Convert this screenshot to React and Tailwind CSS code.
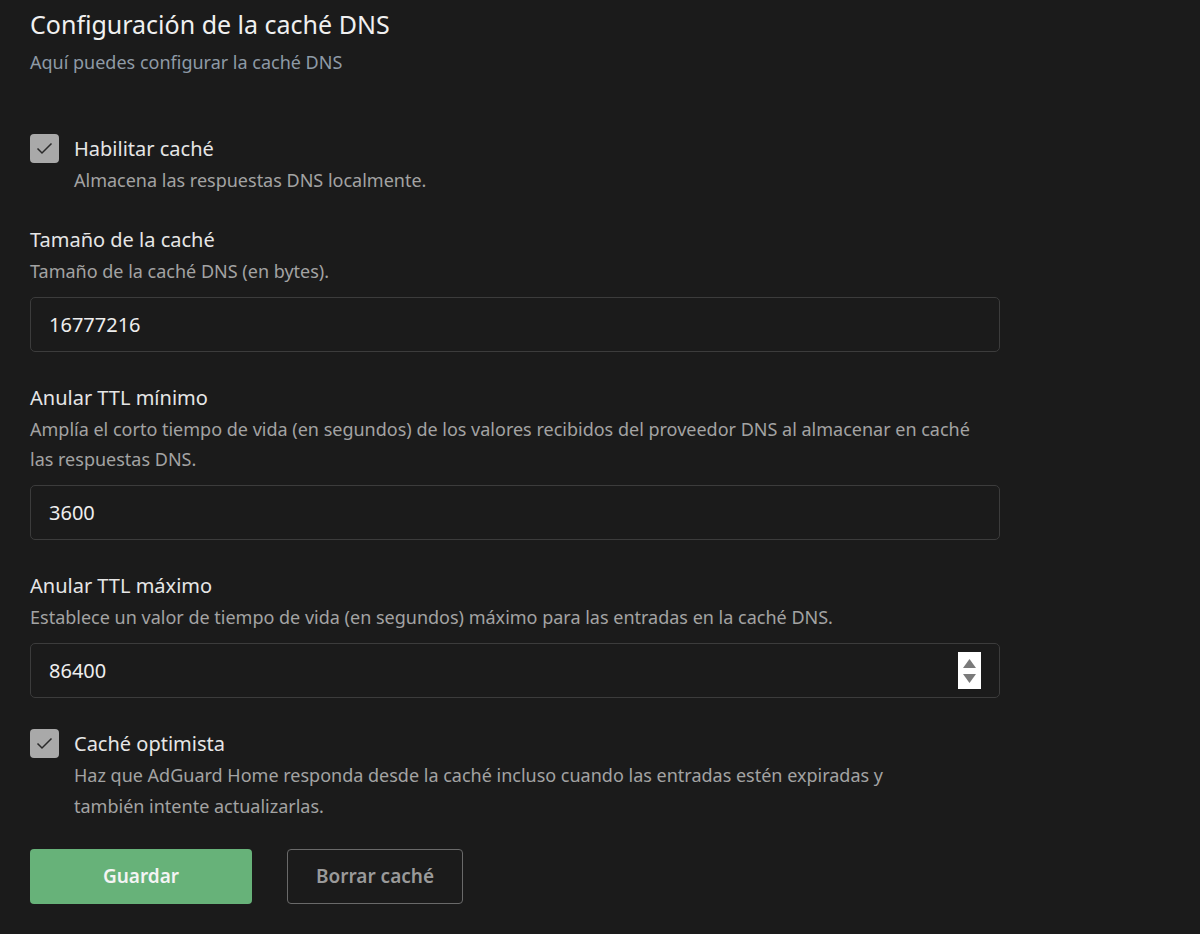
import React, { useState } from "react";

function Check({ checked, onChange }) {
    return (
        <button
            onClick={onChange}
            className="w-[29px] h-[29px] shrink-0 rounded-[4px] bg-[#a9a9a9] flex items-center justify-center"
        >
            {checked && (
                <svg width="17" height="13" viewBox="0 0 17 13" fill="none">
                    <path d="M1.5 6.5 L6 11 L15.5 1.5" stroke="#2a2a2a" strokeWidth="1.5" />
                </svg>
            )}
        </button>
    );
}

function Field({ label, desc, value, onChange, spinner }) {
    return (
        <div>
            <div className="text-[20px] text-[#e6e6e6] leading-[28px]">{label}</div>
            <div className="text-[18px] text-[#a3a3a3] leading-[30px] mt-[2px] max-w-[950px]">{desc}</div>
            <div className="relative mt-[11px] w-[970px] h-[55px] rounded-[5px] border border-[#3c3c3c] bg-[#1b1b1b] flex items-center">
                <input
                    type="text"
                    value={value}
                    onChange={(e) => onChange(e.target.value)}
                    className="w-full bg-transparent outline-none px-[18px] text-[20px] text-[#eeeeee]"
                />
                {spinner && (
                    <div className="absolute right-[18px] top-[8px] w-[23px] h-[37px] bg-white flex flex-col items-center justify-center gap-[6px]">
                        <svg width="13" height="9" viewBox="0 0 13 9">
                            <path d="M6.5 0 L13 9 L0 9 Z" fill="#7a7a7a" />
                        </svg>
                        <svg width="13" height="9" viewBox="0 0 13 9">
                            <path d="M0 0 L13 0 L6.5 9 Z" fill="#7a7a7a" />
                        </svg>
                    </div>
                )}
            </div>
        </div>
    );
}

export default function App() {
    const [cache, setCache] = useState(true);
    const [optimistic, setOptimistic] = useState(true);
    const [size, setSize] = useState("16777216");
    const [minTtl, setMinTtl] = useState("3600");
    const [maxTtl, setMaxTtl] = useState("86400");

    return (
        <div className="min-h-[934px] bg-[#1b1b1b] px-[30px] pt-[7px] font-['Noto_Sans','Open_Sans',sans-serif]">
            <h1 className="text-[25px] text-[#f0f0f0] leading-[34px]">Configuración de la caché DNS</h1>
            <p className="text-[18px] text-[#8e9aa6] leading-[26px] mt-[8px]">Aquí puedes configurar la caché DNS</p>

            <div className="flex gap-[15px] mt-[59px]">
                <Check checked={cache} onChange={() => setCache(!cache)} />
                <div>
                    <div className="text-[20px] text-[#e6e6e6] leading-[29px]">Habilitar caché</div>
                    <div className="text-[18px] text-[#a3a3a3] leading-[31px] mt-[2px]">Almacena las respuestas DNS localmente.</div>
                </div>
            </div>

            <div className="flex flex-col gap-[32px] mt-[30px]">
                <Field
                    label="Tamaño de la caché"
                    desc="Tamaño de la caché DNS (en bytes)."
                    value={size}
                    onChange={setSize}
                />
                <Field
                    label="Anular TTL mínimo"
                    desc="Amplía el corto tiempo de vida (en segundos) de los valores recibidos del proveedor DNS al almacenar en caché las respuestas DNS."
                    value={minTtl}
                    onChange={setMinTtl}
                />
                <Field
                    label="Anular TTL máximo"
                    desc="Establece un valor de tiempo de vida (en segundos) máximo para las entradas en la caché DNS."
                    value={maxTtl}
                    onChange={setMaxTtl}
                    spinner
                />
            </div>

            <div className="flex gap-[15px] mt-[31px]">
                <Check checked={optimistic} onChange={() => setOptimistic(!optimistic)} />
                <div>
                    <div className="text-[20px] text-[#e6e6e6] leading-[29px]">Caché optimista</div>
                    <div className="text-[18px] text-[#a3a3a3] leading-[31px] mt-[2px] max-w-[860px]">
                        Haz que AdGuard Home responda desde la caché incluso cuando las entradas estén expiradas y también intente actualizarlas.
                    </div>
                </div>
            </div>

            <div className="flex gap-[35px] mt-[27px]">
                <button className="w-[222px] h-[55px] rounded-[4px] bg-[#67b279] text-[#f4f4f4] text-[19px] font-semibold">
                    Guardar
                </button>
                <button className="w-[176px] h-[55px] rounded-[4px] border border-[#6a6a6a] text-[#9a9a9a] text-[19px] font-semibold">
                    Borrar caché
                </button>
            </div>
        </div>
    );
}
